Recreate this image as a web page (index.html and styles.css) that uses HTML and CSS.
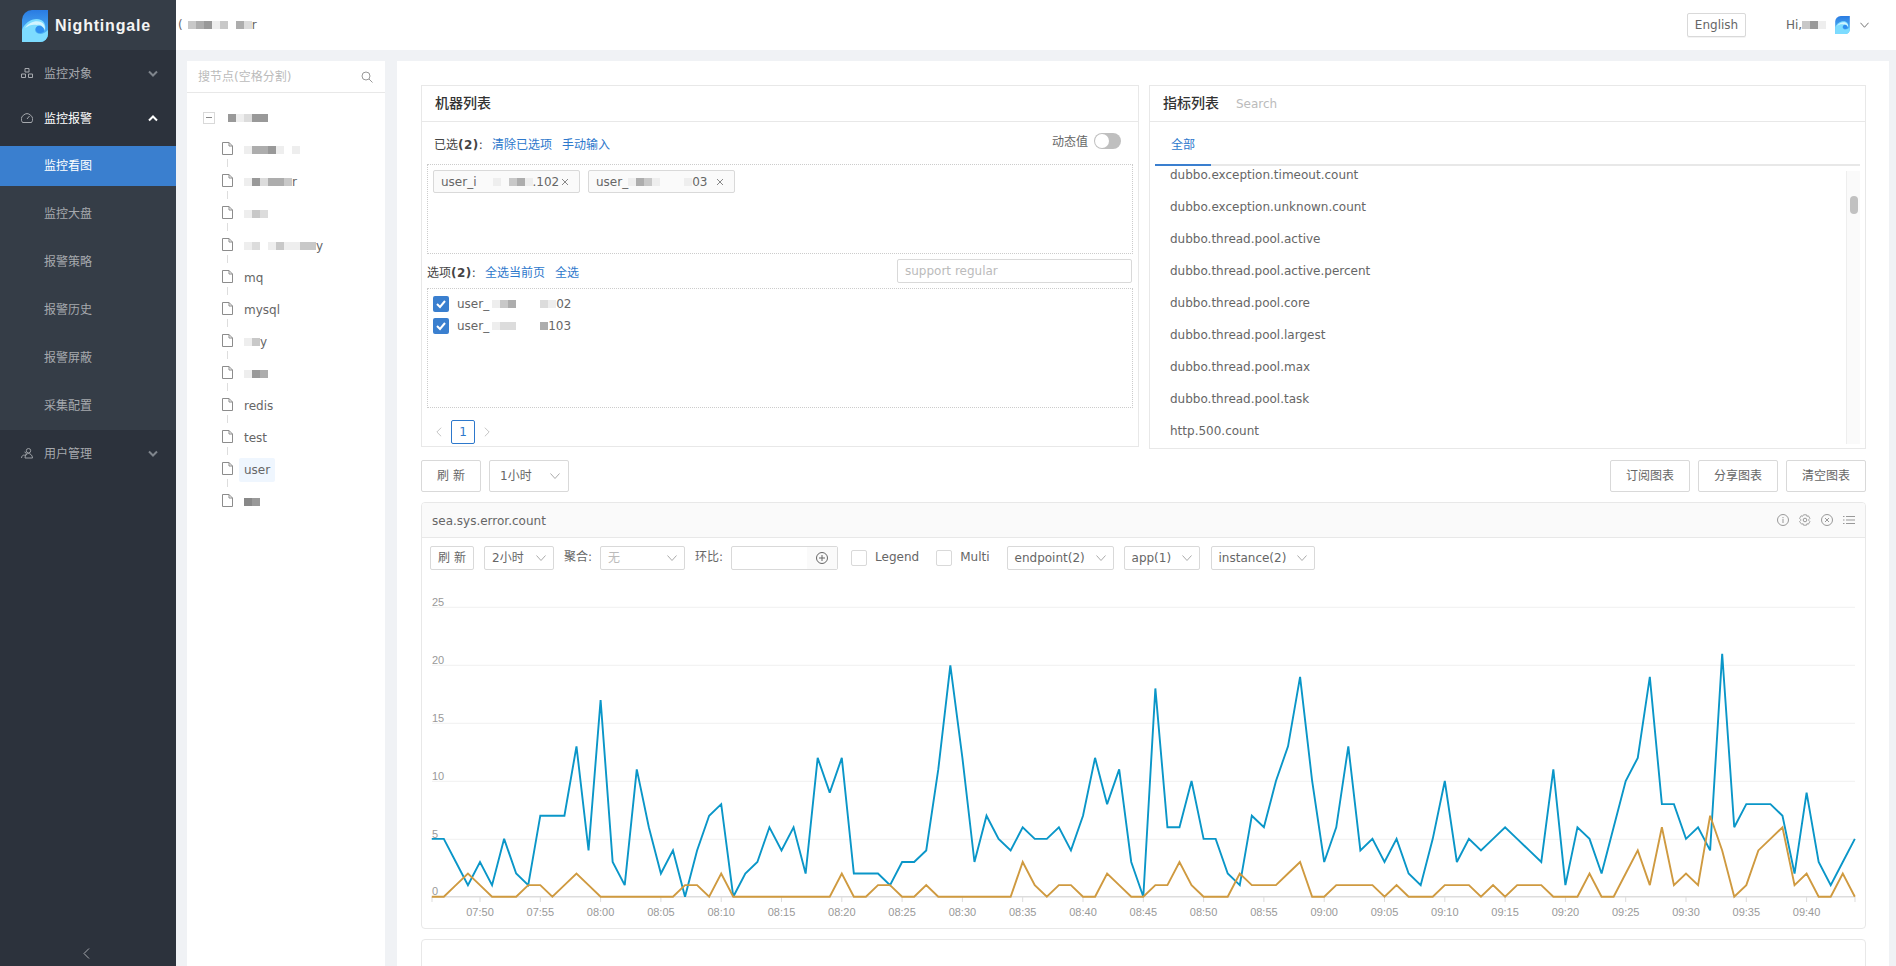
FILE: index.html
```html
<!DOCTYPE html>
<html lang="zh">
<head>
<meta charset="utf-8">
<title>Nightingale</title>
<link rel="stylesheet" href="styles.css">
</head>
<body>
<svg class="defs" aria-hidden="true">
  <defs>
    <linearGradient id="wg" x1="0" y1="0" x2="0" y2="1"><stop offset="0" stop-color="#2a7be2"/><stop offset="1" stop-color="#58c4fa"/></linearGradient>
  </defs>
  <symbol id="chev" viewBox="0 0 10 6"><path d="M.5.5 5 5.500 9.500.5" fill="none" stroke="currentColor" stroke-width="1"/></symbol>
  <symbol id="doc" viewBox="0 0 11 13"><path d="M.5.5h6.500l3.500 3.500v8.500h-10zM7 .5v3.500h3.500" fill="none" stroke="#8c8c8c" stroke-width="1"/></symbol>
  <symbol id="wave" viewBox="0 0 26 32">
    <path d="M10 0h16v24a8 8 0 0 1-8 8H0V10A10 10 0 0 1 10 0z" fill="url(#wg)"/>
    <path d="M0 32V20C3 12 12 7 19 10c4 2 5 6 4 11-1-4-4-6-7-5-3 1-4 5-1 7 3 2 7 1 11-3v4a8 8 0 0 1-8 8z" fill="#7ddcff"/>
    <path d="M3 18c4-6 11-8 16-6 3 1.500 4 4 4 8-2-4-5-6-8-5-4-1-8 0-12 3z" fill="#d2f4ff"/>
    <path d="M14 18c1-2 3-2.500 5-1.500 2 1 3 2.500 3 5-3 2-6 2-7.500 0-.6-1-.9-2.300-.5-3.500z" fill="#2f8ff0"/>
  </symbol>
</svg>
<div class="app">
  <aside class="side">
    <div class="brand">
      <svg class="logo"><use href="#wave"/></svg>
      <span class="brand-name">Nightingale</span>
    </div>
    <div class="menu-head tall-head">
      <svg class="mi" viewBox="0 0 12 12"><path d="M4 1.500h4v3.500H4zM.5 7h4v3.500h-4zM7.500 7h4v3.500h-4z" fill="none" stroke="currentColor"/></svg>
      <span class="mt">监控对象</span>
      <svg class="cv" viewBox="0 0 10 7"><path d="M1 1.500 5 5.500 9 1.500" fill="none" stroke="currentColor" stroke-width="2"/></svg>
    </div>
    <div class="menu-head on">
      <svg class="mi" viewBox="0 0 12 12"><path d="M1.500 10.500a5.500 5.500 0 1 1 9 0zM6 7l2.500-3" fill="none" stroke="currentColor"/></svg>
      <span class="mt">监控报警</span>
      <svg class="cv" viewBox="0 0 10 7"><path d="M1 5.500 5 1.500 9 5.500" fill="none" stroke="currentColor" stroke-width="2"/></svg>
    </div>
    <ul class="sub">
      <li class="active">监控看图</li>
      <li>监控大盘</li>
      <li>报警策略</li>
      <li>报警历史</li>
      <li>报警屏蔽</li>
      <li>采集配置</li>
    </ul>
    <div class="menu-head tall-head">
      <svg class="mi" viewBox="0 0 12 12"><path d="M7.500 1.500a2.200 2.200 0 1 1 0 4.400 2.200 2.200 0 0 1 0-4.400zM3.500 5a1.800 1.800 0 1 1 0 3.600M.5 11c0-2 1.500-3 3-3M4 11c0-3 2-4.500 3.500-4.500S11.500 8 11.500 11z" fill="none" stroke="currentColor" stroke-width=".9"/></svg>
      <span class="mt">用户管理</span>
      <svg class="cv" viewBox="0 0 10 7"><path d="M1 1.500 5 5.500 9 1.500" fill="none" stroke="currentColor" stroke-width="2"/></svg>
    </div>
    <div class="collapse">
      <svg class="collapse-ic" viewBox="0 0 7 11"><path d="M6 .5 1 5.500l5 5" fill="none" stroke="currentColor"/></svg>
    </div>
  </aside>

  <div class="right">
    <header class="top">
      <div class="crumb">(<span class="mz crumb-mz"><i class="s3"></i><i class="s4"></i><i class="s5"></i><i class="s1"></i><i class="s3"></i><i class="s0"></i><i class="s4"></i><i class="s2"></i></span>r</div>
      <button class="lang">English</button>
      <div class="user">Hi,<span class="mz"><i class="s3"></i><i class="s5"></i><i class="s1"></i></span>
        <svg class="avatar"><use href="#wave"/></svg>
        <svg class="uchev"><use href="#chev"/></svg>
      </div>
    </header>

    <div class="body">
      <nav class="tree-panel">
        <div class="tree-search">
          <span>搜节点(空格分割)</span>
          <svg class="sico" viewBox="0 0 12 12"><circle cx="5" cy="5" r="4" fill="none" stroke="#999"/><path d="m8 8 3.500 3.500" stroke="#999"/></svg>
        </div>
        <ul class="tree">
          <li class="root"><span class="sw"></span><span class="mz"><i class="s5"></i><i class="s1"></i><i class="s2"></i><i class="s5"></i><i class="s5"></i></span></li>
          <li class="leaf"><svg class="doc"><use href="#doc"/></svg><span class="lab"><span class="mz"><i class="s1"></i><i class="s4"></i><i class="s4"></i><i class="s5"></i><i class="s1"></i><i class="s0"></i><i class="s1"></i></span></span></li>
          <li class="leaf"><svg class="doc"><use href="#doc"/></svg><span class="lab"><span class="mz"><i class="s1"></i><i class="s5"></i><i class="s2"></i><i class="s4"></i><i class="s4"></i><i class="s3"></i></span>r</span></li>
          <li class="leaf"><svg class="doc"><use href="#doc"/></svg><span class="lab"><span class="mz"><i class="s1"></i><i class="s3"></i><i class="s2"></i></span></span></li>
          <li class="leaf"><svg class="doc"><use href="#doc"/></svg><span class="lab"><span class="mz"><i class="s1"></i><i class="s2"></i><i class="s0"></i><i class="s1"></i><i class="s3"></i><i class="s1"></i><i class="s1"></i><i class="s3"></i><i class="s3"></i></span>y</span></li>
          <li class="leaf"><svg class="doc"><use href="#doc"/></svg><span class="lab">mq</span></li>
          <li class="leaf"><svg class="doc"><use href="#doc"/></svg><span class="lab">mysql</span></li>
          <li class="leaf"><svg class="doc"><use href="#doc"/></svg><span class="lab"><span class="mz"><i class="s1"></i><i class="s3"></i></span>y</span></li>
          <li class="leaf"><svg class="doc"><use href="#doc"/></svg><span class="lab"><span class="mz"><i class="s1"></i><i class="s5"></i><i class="s4"></i></span></span></li>
          <li class="leaf"><svg class="doc"><use href="#doc"/></svg><span class="lab">redis</span></li>
          <li class="leaf"><svg class="doc"><use href="#doc"/></svg><span class="lab">test</span></li>
          <li class="leaf"><svg class="doc"><use href="#doc"/></svg><span class="lab sel">user</span></li>
          <li class="leaf last"><svg class="doc"><use href="#doc"/></svg><span class="lab"><span class="mz"><i class="s6"></i><i class="s5"></i></span></span></li>
        </ul>
      </nav>

      <main class="main">
        <div class="cards">
          <section class="card card-hosts">
            <h3 class="card-head">机器列表</h3>
            <div class="hosts">
              <div class="row-sel">
                <span class="lbl">已选<b>(2)</b>:</span><a class="lnk l1">清除已选项</a><a class="lnk">手动输入</a>
                <span class="dyn">动态值</span><span class="switch"></span>
              </div>
              <div class="box box-sel">
                <span class="tag t1">user_i<span class="mz"><i class="s0"></i><i class="s0"></i><i class="s1"></i><i class="s0"></i><i class="s3"></i><i class="s4"></i><i class="s1"></i></span>.102<svg class="tx" viewBox="0 0 8 8"><path d="m1 1 6 6M7 1 1 7" stroke="#888"/></svg></span>
                <span class="tag t2">user_<span class="mz"><i class="s1"></i><i class="s4"></i><i class="s3"></i><i class="s1"></i><i class="s0"></i><i class="s0"></i><i class="s0"></i><i class="s1"></i></span>03<svg class="tx" viewBox="0 0 8 8"><path d="m1 1 6 6M7 1 1 7" stroke="#888"/></svg></span>
              </div>
              <div class="row-opt">
                <span class="lbl">选项<b>(2)</b>:</span><a class="lnk l1">全选当前页</a><a class="lnk">全选</a>
                <span class="reg">support regular</span>
              </div>
              <div class="box box-opt">
                <div class="opt"><span class="ck"><svg viewBox="0 0 16 16"><path d="m4 8 3 3 5-6" fill="none" stroke="#fff" stroke-width="2"/></svg></span>user_<span class="mz opt-mz"><i class="s1"></i><i class="s3"></i><i class="s4"></i><i class="s0"></i><i class="s0"></i><i class="s0"></i><i class="s2"></i><i class="s1"></i></span>02</div>
                <div class="opt"><span class="ck"><svg viewBox="0 0 16 16"><path d="m4 8 3 3 5-6" fill="none" stroke="#fff" stroke-width="2"/></svg></span>user_<span class="mz opt-mz"><i class="s1"></i><i class="s2"></i><i class="s2"></i><i class="s0"></i><i class="s0"></i><i class="s0"></i><i class="s4"></i></span>103</div>
              </div>
              <div class="pager">
                <svg class="pa" viewBox="0 0 7 11"><path d="M6 .5 1 5.500l5 5" fill="none" stroke="currentColor"/></svg>
                <span class="pg">1</span>
                <svg class="pa" viewBox="0 0 7 11"><path d="M1 .5l5 5-5 5" fill="none" stroke="currentColor"/></svg>
              </div>
            </div>
          </section>

          <section class="card card-metrics">
            <h3 class="card-head">指标列表<span class="srch">Search</span></h3>
            <div class="tabs"><span class="tab">全部</span></div>
            <div class="scroller">
              <ul class="mlist">
                <li>dubbo.exception.timeout.count</li>
                <li>dubbo.exception.unknown.count</li>
                <li>dubbo.thread.pool.active</li>
                <li>dubbo.thread.pool.active.percent</li>
                <li>dubbo.thread.pool.core</li>
                <li>dubbo.thread.pool.largest</li>
                <li>dubbo.thread.pool.max</li>
                <li>dubbo.thread.pool.task</li>
                <li>http.500.count</li>
              </ul>
              <div class="track"><span class="thumb"></span></div>
            </div>
          </section>
        </div>

        <div class="toolbar">
          <button class="btn w60">刷 新</button>
          <button class="sel-btn w80">1小时<svg class="chev"><use href="#chev"/></svg></button>
          <span class="spacer"></span>
          <button class="btn w80">订阅图表</button>
          <button class="btn w80">分享图表</button>
          <button class="btn w80">清空图表</button>
        </div>

        <section class="chart-card">
          <div class="chart-head">
            <span class="chart-title">sea.sys.error.count</span>
            <div class="ch-icons">
              <svg viewBox="0 0 12 12"><circle cx="6" cy="6" r="5.500" fill="none" stroke="currentColor"/><path d="M6 5v4M6 3v1.200" stroke="currentColor"/></svg>
              <svg viewBox="0 0 12 12"><path d="M4.500.8h3l.4 1.500 1.500-.5 1.500 2.600-1.100 1.100v1l1.100 1.100-1.500 2.600-1.500-.5-.4 1.500h-3l-.4-1.500-1.500.5L.6 7.600l1.100-1.100v-1L.6 4.400l1.500-2.600 1.500.5z" fill="none" stroke="currentColor" stroke-width=".9"/><circle cx="6" cy="6" r="1.800" fill="none" stroke="currentColor"/></svg>
              <svg viewBox="0 0 12 12"><circle cx="6" cy="6" r="5.500" fill="none" stroke="currentColor"/><path d="m4 4 4 4M8 4 4 8" stroke="currentColor"/></svg>
              <svg viewBox="0 0 12 12"><path d="M3 2.500h9M3 6h9M3 9.500h9M0 2.500h1.500M0 6h1.500M0 9.500h1.500" stroke="currentColor"/></svg>
            </div>
          </div>
          <div class="chart-tools">
            <button class="btn b44">刷 新</button>
            <button class="sel-btn b70">2小时<svg class="chev"><use href="#chev"/></svg></button>
            <span class="tl tl1">聚合:</span>
            <span class="sel-btn b85 dis">无<svg class="chev"><use href="#chev"/></svg></span>
            <span class="tl tl2">环比:</span>
            <span class="addon-input"><span class="addon"><svg viewBox="0 0 12 12"><circle cx="6" cy="6" r="5.500" fill="none" stroke="#666"/><path d="M3 6h6M6 3v6" stroke="#666"/></svg></span></span>
            <span class="cb cb1"></span><span class="cl">Legend</span>
            <span class="cb cb2"></span><span class="cl">Multi</span>
            <button class="sel-btn b107">endpoint(2)<svg class="chev"><use href="#chev"/></svg></button>
            <button class="sel-btn b76">app(1)<svg class="chev"><use href="#chev"/></svg></button>
            <button class="sel-btn b104">instance(2)<svg class="chev"><use href="#chev"/></svg></button>
          </div>
          <svg class="plot" width="1443" height="348" viewBox="0 0 1443 348">
            <g class="grid">
              <path d="M10 27.300H1433M10 85.300H1433M10 143.300H1433M10 201.300H1433M10 259.300H1433"/>
            </g>
            <path class="axis" d="M10 316.700H1433"/>
            <path class="ticks" d="M10 317v5M58 317v5M118.300 317v5M178.600 317v5M238.900 317v5M299.200 317v5M359.500 317v5M419.800 317v5M480.100 317v5M540.400 317v5M600.700 317v5M661 317v5M721.300 317v5M781.600 317v5M841.900 317v5M902.200 317v5M962.500 317v5M1022.800 317v5M1083.100 317v5M1143.400 317v5M1203.700 317v5M1264 317v5M1324.300 317v5M1384.600 317v5M1433 317v5"/>
            <g class="ylab">
              <text x="10" y="26">25</text><text x="10" y="84">20</text><text x="10" y="142">15</text><text x="10" y="200">10</text><text x="10" y="258">5</text><text x="10" y="315">0</text>
            </g>
            <g class="xlab">
              <text x="58" y="336">07:50</text><text x="118.300" y="336">07:55</text><text x="178.600" y="336">08:00</text><text x="238.900" y="336">08:05</text><text x="299.200" y="336">08:10</text><text x="359.500" y="336">08:15</text><text x="419.800" y="336">08:20</text><text x="480.100" y="336">08:25</text><text x="540.400" y="336">08:30</text><text x="600.700" y="336">08:35</text><text x="661" y="336">08:40</text><text x="721.300" y="336">08:45</text><text x="781.600" y="336">08:50</text><text x="841.900" y="336">08:55</text><text x="902.200" y="336">09:00</text><text x="962.500" y="336">09:05</text><text x="1022.800" y="336">09:10</text><text x="1083.100" y="336">09:15</text><text x="1143.400" y="336">09:20</text><text x="1203.700" y="336">09:25</text><text x="1264" y="336">09:30</text><text x="1324.300" y="336">09:35</text><text x="1384.600" y="336">09:40</text>
            </g>
            <g transform="translate(9.760 316.700) scale(12.060 -11.570)">
              <polyline class="ln blue" points="0,5 1,5 2,3 3,1 4,3 5,1 6,5 7,2 8,1 9,7 10,7 11,7 12,13 13,4 14,17 15,3 16,1 17,11 18,6 19,2 20,4 21,0 22,4 23,7 24,8 25,0 26,2 27,3 28,6 29,4 30,6 31,2 32,12 33,9 34,12 35,2 36,2 37,2 38,1 39,3 40,3 41,4 42,11 43,20 44,12 45,3 46,7 47,5 48,4 49,6 50,5 51,5 52,6 53,4 54,7 55,12 56,8 57,11 58,3 59,0 60,18 61,6 62,6 63,10 64,5 65,5 66,2 67,1 68,7 69,6 70,10 71,13 72,19 73,10 74,3 75,6 76,13 77,4 78,5 79,3 80,5 81,2 82,1 83,5 84,10 85,3 86,5 87,4 88,5 89,6 90,5 91,4 92,3 93,11 94,1 95,6 96,5 97,2 98,6 99,10 100,12 101,19 102,8 103,8 104,5 105,6 106,4 107,21 108,6 109,8 110,8 111,8 112,7 113,2 114,9 115,3 116,1 117,3 118,5"/>
              <polyline class="ln orange" points="0,0 1,0 2,1 3,2 4,1 5,0 6,0 7,0 8,1 9,1 10,0 11,1 12,2 13,1 14,0 15,0 16,0 17,0 18,0 19,0 20,0 21,1 22,1 23,0 24,2 25,0 26,0 27,0 28,0 29,0 30,0 31,0 32,0 33,0 34,2 35,0 36,0 37,1 38,1 39,0 40,0 41,1 42,0 43,0 44,0 45,0 46,0 47,0 48,0 49,3 50,1 51,0 52,1 53,1 54,0 55,0 56,2 57,1 58,0 59,0 60,1 61,1 62,3 63,1 64,0 65,0 66,0 67,2 68,1 69,1 70,1 71,2 72,3 73,0 74,0 75,1 76,1 77,1 78,1 79,0 80,1 81,0 82,0 83,0 84,1 85,1 86,1 87,0 88,1 89,0 90,1 91,1 92,1 93,0 94,0 95,0 96,2 97,0 98,0 99,2 100,4 101,1 102,6 103,1 104,2 105,1 106,7 107,4 108,0 109,1 110,4 111,5 112,6 113,1 114,2 115,0 116,0 117,2 118,0"/>
            </g>
          </svg>
        </section>
        <section class="chart-card next"></section>
      </main>
    </div>
  </div>
</div>
</body>
</html>
```
FILE: styles.css
```css
* { box-sizing: border-box; }
html, body { margin: 0; height: 966px; overflow: hidden; }
body { font: 12px/1.5 "DejaVu Sans", "Noto Sans CJK SC", sans-serif; color: #666; background: #f0f2f5; }
ul { list-style: none; margin: 0; padding: 0; }
h3 { margin: 0; }
button { font: inherit; color: inherit; background: #fff; margin: 0; cursor: pointer; }
.defs { position: absolute; width: 0; height: 0; }
.app { display: flex; height: 966px; }

/* sidebar */
.side { width: 176px; flex: none; background: #2c323c; color: #a6a9ae; display: flex; flex-direction: column; position: relative; }
.brand { height: 50px; background: #353d47; display: flex; align-items: flex-start; padding: 10px 0 0 22px; }
.logo { width: 26px; height: 32px; }
.brand-name { font: bold 16px/32px "Liberation Sans", sans-serif; letter-spacing: .8px; color: #f4f4f4; margin-left: 7px; }
.menu-head { height: 44px; display: flex; align-items: center; padding: 0 18px 0 21px; color: #a6a9ae; }
.menu-head.tall-head { height: 46px; }
.menu-head.on { color: #fff; }
.mi { width: 12px; height: 12px; color: #a6a9ae; }
.mt { margin-left: 11px; flex: 1; padding-top: 1px; }
.cv { width: 10px; height: 7px; color: #7f858c; }
.on .cv { color: #fff; }
.sub { background: #353d47; padding: 0 0 4px; margin-top: 6px; }
.sub li { height: 40px; line-height: 40px; padding-left: 44px; margin-bottom: 8px; }
.sub li:last-child { margin-bottom: 0; }
.sub li.active { background: #3a7fcf; color: #fff; }
.collapse { margin-top: auto; height: 18px; display: flex; justify-content: center; padding-right: 4px; color: #a6a9ae; }
.collapse-ic { width: 7px; height: 11px; }

/* header */
.right { flex: 1; min-width: 0; display: flex; flex-direction: column; }
.top { height: 50px; background: #fff; display: flex; align-items: center; flex: none; }
.crumb { margin-left: 2px; flex: 1; display: flex; align-items: center; color: #666; }
.crumb-mz { margin-left: 5px; }
.lang { width: 59px; height: 24px; border: 1px solid #d9d9d9; border-radius: 2px; padding: 0; margin-right: 40px; box-shadow: 0 1px 0 #f3f3f3; }
.user { display: flex; align-items: center; width: 110px; }
.avatar { width: 15px; height: 18px; margin-left: 9px; }
.uchev { width: 9px; height: 6px; margin-left: 10px; color: #666; }

/* mosaic */
.mz { display: inline-flex; vertical-align: middle; }
.mz i { width: 8px; height: 8px; display: block; }
.s0 { background: transparent; }
.s1 { background: #eeeeee; }
.s2 { background: #dcdcdc; }
.s3 { background: #c8c8c8; }
.s4 { background: #adadad; }
.s5 { background: #999; }
.s6 { background: #888; }

/* tree */
.body { flex: 1; display: flex; min-height: 0; padding: 11px 7px 0 11px; gap: 12px; }
.tree-panel { width: 198px; flex: none; background: #fff; }
.tree-search { height: 32px; border-bottom: 1px solid #e8e8e8; display: flex; align-items: center; justify-content: space-between; padding: 0 12px 0 11px; color: #bbb; }
.sico { width: 12px; height: 12px; }
.tree { padding-top: 9px; }
.tree li { height: 32px; display: flex; align-items: center; position: relative; }
.root { padding-left: 16px; }
.sw { width: 12px; height: 12px; border: 1px solid #d9d9d9; position: relative; margin-right: 13px; margin-top: -1px; }
.sw::after { content: ""; position: absolute; left: 2px; right: 2px; top: 4px; height: 1px; background: #888; }
.leaf { padding-left: 35px; }
.leaf::after { content: ""; position: absolute; left: 40px; top: 25px; width: 1px; height: 8px; background: #ddd; }
.leaf.last::after { display: none; }
.doc { width: 11px; height: 13px; margin-top: -3px; }
.lab { margin-left: 6px; padding: 0 5px; height: 24px; line-height: 22px; border-radius: 2px; display: flex; align-items: center; }
.lab.sel { background: #eff6fe; }

/* main */
.main { flex: 1; min-width: 0; background: #fff; padding: 24px 23px 0 24px; overflow: hidden; }
.cards { display: grid; grid-template-columns: 718px 717px; gap: 10px; align-items: start; }
.card { border: 1px solid #e8e8e8; }
.card-hosts { height: 362px; }
.card-metrics { height: 364px; }
.card-head { height: 36px; border-bottom: 1px solid #e8e8e8; font-size: 14px; font-weight: 500; line-height: 35px; color: #333; padding-left: 13px; }
.hosts { padding: 0 5px; }
.row-sel { height: 42px; display: flex; align-items: center; padding-left: 7px; }
.lbl { color: #444; padding-top: 3px; margin-right: 6px; }
.lbl b { font-weight: 700; letter-spacing: .5px; }
.lnk { color: #2d78cc; margin-left: 10px; padding-top: 3px; }
.lnk.l1 { margin-left: 3px; }
.dyn { margin-left: auto; margin-top: -3px; }
.switch { width: 27px; height: 16px; border-radius: 8px; background: #bfbfbf; margin: -4px 12px 0 6px; position: relative; }
.switch::after { content: ""; position: absolute; left: 1px; top: 1px; width: 14px; height: 14px; border-radius: 50%; background: #fff; }
.box { border: 1px dotted #ccc; }
.box-sel { height: 90px; padding: 5px; display: flex; gap: 8px; align-items: flex-start; }
.tag { height: 23px; border: 1px solid #d9d9d9; border-radius: 2px; background: #fafafa; display: flex; align-items: center; padding: 0 10px 0 7px; }
.t1 { width: 147px; }
.t2 { width: 147px; }
.tx { width: 8px; height: 8px; margin-left: auto; }
.row-opt { height: 34px; display: flex; align-items: center; }
.reg { margin-left: auto; margin-right: 1px; width: 235px; height: 24px; border: 1px solid #d9d9d9; border-radius: 2px; color: #bbb; padding: 0 7px; line-height: 22px; }
.box-opt { height: 120px; padding: 7px 5px; }
.opt { height: 16px; margin-bottom: 6px; display: flex; align-items: center; }
.opt-mz { margin-left: 3px; }
.ck { width: 16px; height: 16px; background: #3a7fcf; border-radius: 2px; margin-right: 8px; display: block; }
.ck svg { display: block; width: 16px; height: 16px; }
.pager { height: 38px; padding: 10px 0 0 9px; display: flex; align-items: center; }
.pa { width: 6px; height: 10px; color: #bbb; }
.pg { width: 24px; height: 24px; border: 1px solid #2d78cc; border-radius: 2px; color: #2d78cc; text-align: center; line-height: 22px; margin: 0 9px; }
.srch { font-size: 12px; font-weight: 400; color: #bbb; margin-left: 17px; }
.tabs { margin: 0 5px; height: 44px; border-bottom: 2px solid #e8e8e8; position: relative; }
.tab { display: block; width: 56px; height: 44px; line-height: 46px; text-align: center; color: #2d78cc; border-bottom: 2px solid #3a7fcf; }
.scroller { margin: 2px 5px 0; height: 276px; display: flex; overflow: hidden; }
.mlist { flex: 1; padding-left: 15px; margin-top: -9px; }
.mlist li { height: 32px; line-height: 32px; }
.track { width: 14px; margin-top: 3px; background: #fafafa; border-left: 1px solid #eee; padding: 25px 0 0 3px; }
.thumb { display: block; width: 8px; height: 18px; border-radius: 4px; background: #c1c1c1; }

.toolbar { display: flex; gap: 8px; height: 32px; margin-top: 11px; margin-bottom: 10px; }
.spacer { flex: 1; }
.btn { border: 1px solid #d9d9d9; border-radius: 2px; padding: 0; color: #666; }
.sel-btn { border: 1px solid #d9d9d9; border-radius: 2px; background: #fff; padding: 0 8px 0 10px; display: flex; align-items: center; justify-content: space-between; color: #666; }
.w60 { width: 60px; }
.w80 { width: 80px; }
.chev { width: 10px; height: 6px; color: #aaa; flex: none; }

.chart-card { border: 1px solid #e8e8e8; border-radius: 4px; height: 427px; overflow: hidden; }
.chart-card.next { margin-top: 10px; height: 100px; }
.chart-head { height: 35px; background: #fafafa; border-bottom: 1px solid #e8e8e8; display: flex; align-items: center; justify-content: space-between; padding: 0 10px 0 10px; color: #666; }
.chart-title { padding-top: 2px; }
.ch-icons { display: flex; gap: 10px; color: #999; }
.ch-icons svg { width: 12px; height: 12px; display: block; }
.chart-tools { height: 42px; display: flex; align-items: flex-start; padding: 8px 0 0 8px; }
.chart-tools > * { height: 24px; }
.chart-tools .sel-btn { padding: 0 7px; }
.b44 { width: 44px; }
.b70 { width: 70px; margin-left: 10px; }
.b85 { width: 85px; }
.b107 { width: 107px; margin-left: 17px; }
.b76 { width: 76px; margin-left: 10px; }
.b104 { width: 104px; margin-left: 11px; }
.dis { color: #bbb; }
.tl { line-height: 22px; }
.tl1 { margin-left: 10px; margin-right: 8px; }
.tl2 { margin-left: 10px; margin-right: 8px; }
.addon-input { width: 107px; border: 1px solid #d9d9d9; border-radius: 2px; display: flex; justify-content: flex-end; }
.addon { width: 30px; background: #fafafa; display: flex; align-items: center; justify-content: center; }
.addon svg { width: 12px; height: 12px; }
.cb { width: 16px; height: 16px !important; margin-top: 4px; border: 1px solid #d9d9d9; border-radius: 2px; }
.cb1 { margin-left: 13px; }
.cb2 { margin-left: 17px; }
.cl { margin-left: 8px; line-height: 22px; }
.plot { display: block; }
.grid path { stroke: #f0f0f0; fill: none; }
.axis { stroke: #ddd; stroke-width: 1.5; fill: none; }
.ticks { stroke: #ddd; fill: none; }
.ylab text, .xlab text { font: 11px "Liberation Sans", sans-serif; fill: #999; }
.xlab text { text-anchor: middle; }
.ln { fill: none; stroke-width: 1.9; vector-effect: non-scaling-stroke; stroke-linejoin: miter; stroke-miterlimit: 3; }
.blue { stroke: #0a96c8; }
.orange { stroke: #cf9a40; }
```
